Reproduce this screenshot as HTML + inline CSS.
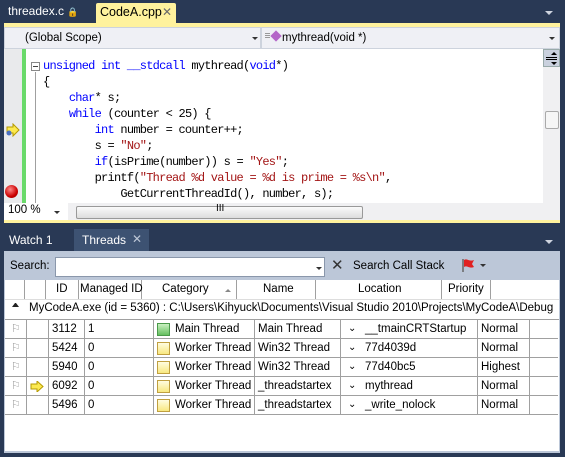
<!DOCTYPE html>
<html><head><style>
*{margin:0;padding:0;box-sizing:border-box}
body{width:565px;height:457px;background:#293955;position:relative;overflow:hidden;font-family:"Liberation Sans",sans-serif;font-size:11.5px;color:#000}
.a{position:absolute}
.code{font-family:"Liberation Mono",monospace;font-size:12px;letter-spacing:-0.75px;white-space:pre;line-height:16px}
.k{color:#0000ff}.s{color:#a31515}
.row{position:absolute;left:5px;width:553px;height:19px;border-bottom:1px solid #a0a0a0;font-size:11.5px;line-height:18px}
.row span{position:absolute;white-space:nowrap}
.hl{position:absolute;width:1px;background:#a0a0a0}
</style></head><body>
<!-- top tabs -->
<div class="a" style="left:8px;top:4px;color:#fff;font-size:12px">threadex.c <span style="font-size:9px">🔒</span></div>
<div class="a" style="left:96px;top:3px;width:80px;height:21px;background:#fff29d;border-radius:2px 2px 0 0"></div>
<div class="a" style="left:100px;top:5px;font-size:12.5px">CodeA.cpp</div>
<div class="a" style="left:162px;top:5px;font-size:12px;color:#6a6a6a">✕</div>
<div class="a" style="left:545px;top:11px;width:0;height:0;border-left:4px solid transparent;border-right:4px solid transparent;border-top:4px solid #ced4df"></div>
<div class="a" style="left:4px;top:23px;width:556px;height:4px;background:#fff29d"></div>
<!-- dropdown bar -->
<div class="a" style="left:4px;top:27px;width:556px;height:22px;background:#cdd3dd"></div>
<div class="a" style="left:5px;top:28px;width:255px;height:20px;background:#eff0f5"></div>
<div class="a" style="left:25px;top:32px;font-size:11.5px">(Global Scope)</div>
<div class="a" style="left:252px;top:37px;border-left:3px solid transparent;border-right:3px solid transparent;border-top:3px solid #333"></div>
<div class="a" style="left:262px;top:28px;width:297px;height:20px;background:#eff0f5"></div>
<div class="a" style="left:265px;top:33px;width:5px;height:1px;background:#999;box-shadow:0 2px #999,0 4px #999"></div>
<div class="a" style="left:272px;top:32px;width:8px;height:8px;background:#b466c8;transform:rotate(45deg)"></div>
<div class="a" style="left:282px;top:32px;font-size:11.5px">mythread(void *)</div>
<div class="a" style="left:549px;top:37px;border-left:3px solid transparent;border-right:3px solid transparent;border-top:3px solid #333"></div>
<!-- editor -->
<div class="a" style="left:4px;top:49px;width:539px;height:154px;background:#fff"></div>
<div class="a" style="left:4px;top:49px;width:18px;height:154px;background:#e9eaec"></div>
<div class="a" style="left:22px;top:49px;width:4px;height:154px;background:#6ada6a"></div>
<div class="a" style="left:31px;top:62px;width:9px;height:9px;border:1px solid #888;background:#fff"></div>
<div class="a" style="left:33px;top:66px;width:5px;height:1px;background:#444"></div>
<div class="a" style="left:35px;top:72px;width:1px;height:131px;background:#a0a0a0"></div>
<div class="a code" style="left:43px;top:58px"><span class="k">unsigned</span> <span class="k">int</span> <span class="k">__stdcall</span> mythread(<span class="k">void</span>*)
{
    <span class="k">char</span>* s;
    <span class="k">while</span> (counter &lt; 25) {
        <span class="k">int</span> number = counter++;
        s = <span class="s">"No"</span>;
        <span class="k">if</span>(isPrime(number)) s = <span class="s">"Yes"</span>;
        printf(<span class="s">"Thread %d value = %d is prime = %s\n"</span>,
            GetCurrentThreadId(), number, s);</div>
<svg class="a" style="left:5px;top:123px" width="16" height="14"><path d="M2 4h6V1l6 6-6 6v-3H2z" fill="#fce94f" stroke="#b59a00" stroke-width="1"/><circle cx="4" cy="10" r="2.5" fill="#4a6fc0"/></svg>
<div class="a" style="left:5px;top:185px;width:13px;height:13px;border-radius:50%;background:radial-gradient(circle at 40% 35%,#f88,#c00 60%,#800)"></div>
<!-- vscroll -->
<div class="a" style="left:543px;top:49px;width:17px;height:154px;background:#f0f0f2"></div>
<div class="a" style="left:543px;top:49px;width:17px;height:18px;background:#cad1de;border:1px solid #9aa"></div>
<div class="a" style="left:546px;top:57px;width:11px;height:1px;background:#000;box-shadow:0 2px #000"></div>
<div class="a" style="left:551px;top:52px;border-left:3px solid transparent;border-right:3px solid transparent;border-bottom:3px solid #000"></div>
<div class="a" style="left:551px;top:62px;border-left:3px solid transparent;border-right:3px solid transparent;border-top:3px solid #000"></div>
<div class="a" style="left:545px;top:111px;width:14px;height:18px;background:#f6f6f6;border:1px solid #aaa;border-radius:2px"></div>
<!-- bottom bar -->
<div class="a" style="left:4px;top:203px;width:556px;height:17px;background:#f0f0f2"></div>
<div class="a" style="left:4px;top:203px;width:64px;height:17px;background:#fff"></div>
<div class="a" style="left:8px;top:204px;font-size:11.5px">100 %</div>
<div class="a" style="left:54px;top:211px;border-left:3px solid transparent;border-right:3px solid transparent;border-top:3px solid #333"></div>
<div class="a" style="left:76px;top:206px;width:287px;height:13px;background:linear-gradient(#fafafa,#ddd);border:1px solid #999;border-radius:2px"></div>
<div class="a" style="left:216px;top:203px;font-size:10px">III</div>
<div class="a" style="left:4px;top:220px;width:556px;height:3px;background:#fff29d"></div>
<!-- bottom tabs -->
<div class="a" style="left:9px;top:233px;color:#fff;font-size:12px">Watch 1</div>
<div class="a" style="left:74px;top:229px;width:75px;height:22px;background:#3d5272"></div>
<div class="a" style="left:82px;top:233px;color:#fff;font-size:12px">Threads</div>
<div class="a" style="left:132px;top:232px;color:#bcc6d6;font-size:12px">✕</div>
<div class="a" style="left:545px;top:240px;border-left:4px solid transparent;border-right:4px solid transparent;border-top:4px solid #ced4df"></div>
<!-- panel -->
<div class="a" style="left:4px;top:251px;width:556px;height:202px;background:#bcc7d8"></div>
<div class="a" style="left:10px;top:260px;font-size:11.5px">Search:</div>
<div class="a" style="left:55px;top:257px;width:270px;height:20px;background:#fff;border:1px solid #8a97ab"></div>
<div class="a" style="left:316px;top:267px;border-left:3px solid transparent;border-right:3px solid transparent;border-top:3px solid #333"></div>
<div class="a" style="left:331px;top:256px;font-size:15px;color:#333">✕</div>
<div class="a" style="left:353px;top:260px;font-size:11.5px">Search Call Stack</div>
<svg class="a" style="left:460px;top:257px" width="16" height="16"><path d="M3 2v13" stroke="#666" stroke-width="1.5"/><path d="M4 3c3-2 5 2 10 0l-2 4 2 3c-5 2-7-2-10 0z" fill="#e02020"/></svg>
<div class="a" style="left:480px;top:264px;border-left:3px solid transparent;border-right:3px solid transparent;border-top:3px solid #333"></div>
<!-- grid -->
<div class="a" style="left:5px;top:280px;width:554px;height:171px;background:#fff"></div>
<div class="a" style="left:5px;top:280px;width:554px;height:20px">
  <div class="hl" style="left:19px;top:0;height:20px"></div><div class="hl" style="left:40px;top:0;height:20px"></div>
  <div class="hl" style="left:73px;top:0;height:20px"></div><div class="hl" style="left:136px;top:0;height:20px"></div>
  <div class="hl" style="left:231px;top:0;height:20px"></div><div class="hl" style="left:310px;top:0;height:20px"></div>
  <div class="hl" style="left:436px;top:0;height:20px"></div><div class="hl" style="left:485px;top:0;height:20px"></div>
  <span class="a" style="left:51px;top:3px">ID</span>
  <span class="a" style="left:75px;top:3px">Managed ID</span>
  <span class="a" style="left:157px;top:3px">Category</span>
  <span class="a" style="left:220px;top:9px;border-left:3px solid transparent;border-right:3px solid transparent;border-bottom:3px solid #888"></span>
  <span class="a" style="left:258px;top:3px">Name</span>
  <span class="a" style="left:353px;top:3px">Location</span>
  <span class="a" style="left:443px;top:3px">Priority</span>
</div>
<div class="a" style="left:5px;top:299px;width:554px;height:1px;background:#ddd"></div>
<div class="a" style="left:12px;top:302px;width:7px;height:5px;border-left:3px solid transparent;border-right:3px solid transparent;border-bottom:4px solid #222"></div>
<div class="a" style="left:29px;top:302px;font-size:11.5px;white-space:nowrap;width:530px;overflow:hidden">MyCodeA.exe (id = 5360) : C:\Users\Kihyuck\Documents\Visual Studio 2010\Projects\MyCodeA\Debug</div>
<div class="a" style="left:5px;top:319px;width:554px;height:1px;background:#a0a0a0"></div>

<div class="row" style="top:320px"><div class="hl" style="left:21px;top:0;height:19px"></div><div class="hl" style="left:43px;top:0;height:19px"></div><div class="hl" style="left:79px;top:0;height:19px"></div><div class="hl" style="left:148px;top:0;height:19px"></div><div class="hl" style="left:249px;top:0;height:19px"></div><div class="hl" style="left:335px;top:0;height:19px"></div><div class="hl" style="left:472px;top:0;height:19px"></div><div class="hl" style="left:524px;top:0;height:19px"></div>
<span style="left:6px;color:#999;font-size:11px">⚐</span><span style="left:47px">3112</span><span style="left:83px">1</span><span style="left:152px;top:3px;width:13px;height:13px;background:linear-gradient(#c8f0c0,#66c060);border:1px solid #4a9a4a"></span><span style="left:170px">Main Thread</span><span style="left:253px">Main Thread</span><span style="left:343px;font-size:10px">⌄</span><span style="left:360px">__tmainCRTStartup</span><span style="left:476px">Normal</span></div>
<div class="row" style="top:339px"><div class="hl" style="left:21px;top:0;height:19px"></div><div class="hl" style="left:43px;top:0;height:19px"></div><div class="hl" style="left:79px;top:0;height:19px"></div><div class="hl" style="left:148px;top:0;height:19px"></div><div class="hl" style="left:249px;top:0;height:19px"></div><div class="hl" style="left:335px;top:0;height:19px"></div><div class="hl" style="left:472px;top:0;height:19px"></div><div class="hl" style="left:524px;top:0;height:19px"></div>
<span style="left:6px;color:#999;font-size:11px">⚐</span><span style="left:47px">5424</span><span style="left:83px">0</span><span style="left:152px;top:3px;width:13px;height:13px;background:linear-gradient(#fffce0,#f8e880);border:1px solid #c0a040"></span><span style="left:170px">Worker Thread</span><span style="left:253px">Win32 Thread</span><span style="left:343px;font-size:10px">⌄</span><span style="left:360px">77d4039d</span><span style="left:476px">Normal</span></div>
<div class="row" style="top:358px"><div class="hl" style="left:21px;top:0;height:19px"></div><div class="hl" style="left:43px;top:0;height:19px"></div><div class="hl" style="left:79px;top:0;height:19px"></div><div class="hl" style="left:148px;top:0;height:19px"></div><div class="hl" style="left:249px;top:0;height:19px"></div><div class="hl" style="left:335px;top:0;height:19px"></div><div class="hl" style="left:472px;top:0;height:19px"></div><div class="hl" style="left:524px;top:0;height:19px"></div>
<span style="left:6px;color:#999;font-size:11px">⚐</span><span style="left:47px">5940</span><span style="left:83px">0</span><span style="left:152px;top:3px;width:13px;height:13px;background:linear-gradient(#fffce0,#f8e880);border:1px solid #c0a040"></span><span style="left:170px">Worker Thread</span><span style="left:253px">Win32 Thread</span><span style="left:343px;font-size:10px">⌄</span><span style="left:360px">77d40bc5</span><span style="left:476px">Highest</span></div>
<div class="row" style="top:377px"><div class="hl" style="left:21px;top:0;height:19px"></div><div class="hl" style="left:43px;top:0;height:19px"></div><div class="hl" style="left:79px;top:0;height:19px"></div><div class="hl" style="left:148px;top:0;height:19px"></div><div class="hl" style="left:249px;top:0;height:19px"></div><div class="hl" style="left:335px;top:0;height:19px"></div><div class="hl" style="left:472px;top:0;height:19px"></div><div class="hl" style="left:524px;top:0;height:19px"></div>
<span style="left:6px;color:#999;font-size:11px">⚐</span><svg style="position:absolute;left:25px;top:4px" width="14" height="11"><path d="M1 3h6V0l6 5.5-6 5.5V8H1z" fill="#fce94f" stroke="#b59a00"/></svg><span style="left:47px">6092</span><span style="left:83px">0</span><span style="left:152px;top:3px;width:13px;height:13px;background:linear-gradient(#fffce0,#f8e880);border:1px solid #c0a040"></span><span style="left:170px">Worker Thread</span><span style="left:253px">_threadstartex</span><span style="left:343px;font-size:10px">⌄</span><span style="left:360px">mythread</span><span style="left:476px">Normal</span></div>
<div class="row" style="top:396px"><div class="hl" style="left:21px;top:0;height:19px"></div><div class="hl" style="left:43px;top:0;height:19px"></div><div class="hl" style="left:79px;top:0;height:19px"></div><div class="hl" style="left:148px;top:0;height:19px"></div><div class="hl" style="left:249px;top:0;height:19px"></div><div class="hl" style="left:335px;top:0;height:19px"></div><div class="hl" style="left:472px;top:0;height:19px"></div><div class="hl" style="left:524px;top:0;height:19px"></div>
<span style="left:6px;color:#999;font-size:11px">⚐</span><span style="left:47px">5496</span><span style="left:83px">0</span><span style="left:152px;top:3px;width:13px;height:13px;background:linear-gradient(#fffce0,#f8e880);border:1px solid #c0a040"></span><span style="left:170px">Worker Thread</span><span style="left:253px">_threadstartex</span><span style="left:343px;font-size:10px">⌄</span><span style="left:360px">_write_nolock</span><span style="left:476px">Normal</span></div>
</body></html>
